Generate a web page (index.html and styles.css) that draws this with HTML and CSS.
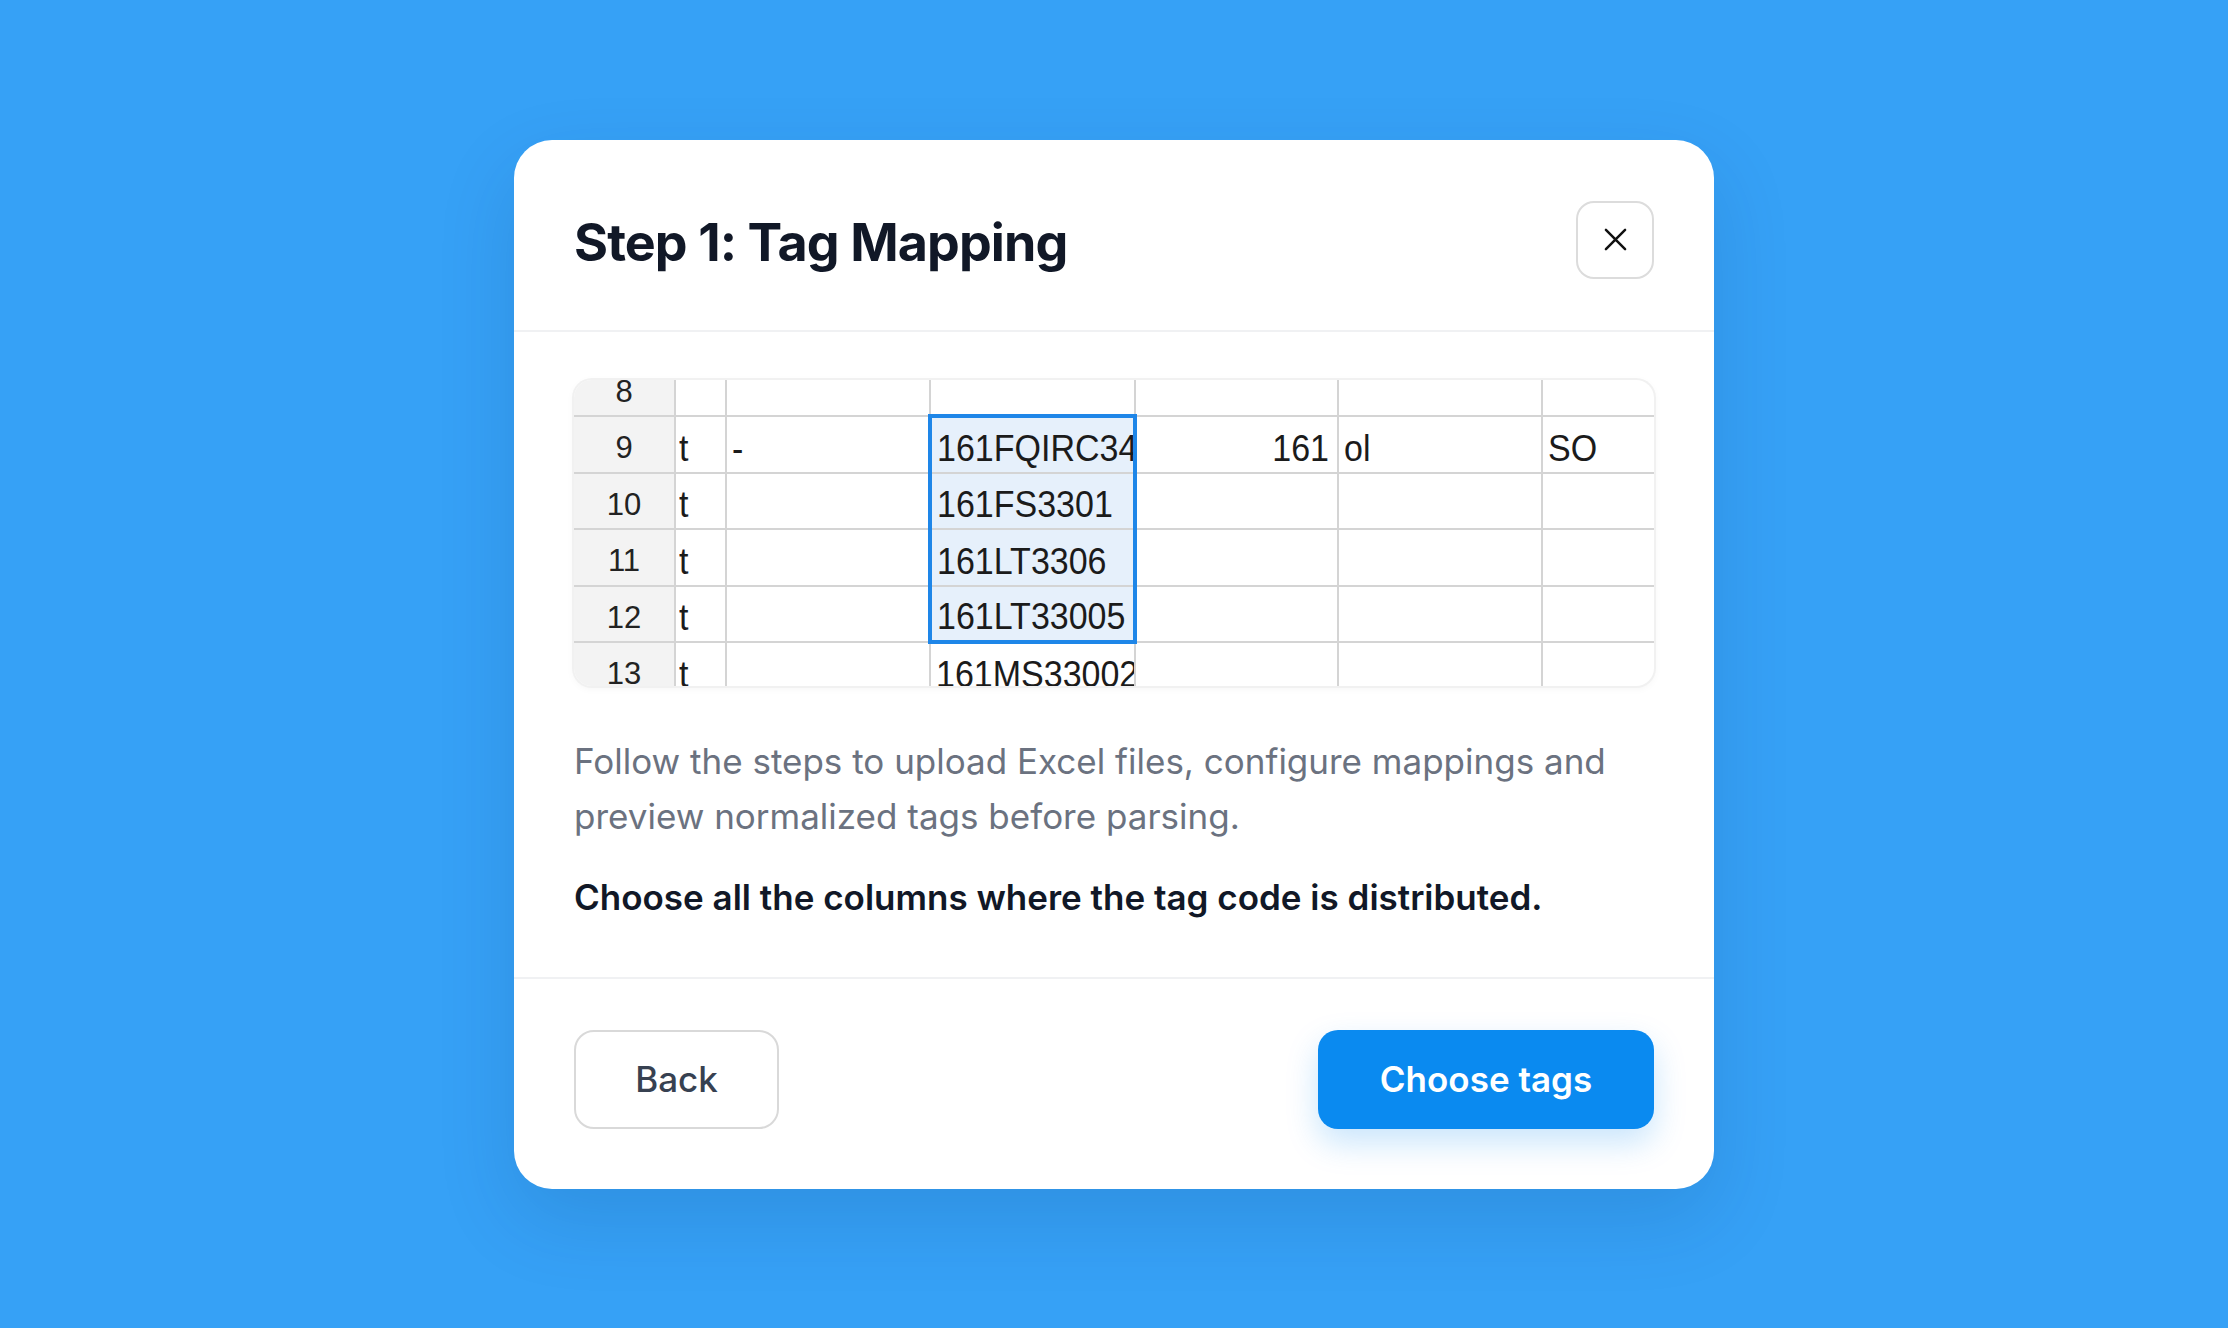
FILE: index.html
```html
<!DOCTYPE html>
<html lang="en">
<head>
<meta charset="utf-8">
<title>Step 1: Tag Mapping</title>
<link rel="stylesheet" href="styles.css">
</head>
<body>
<div class="modal">
  <div class="modal-header">
    <h1 class="title">Step 1: Tag Mapping</h1>
    <button class="close" aria-label="Close">
      <svg viewBox="0 0 24 24" width="24" height="24"><path d="M2 2 L22 22 M22 2 L2 22" stroke="#111" stroke-width="2.6" stroke-linecap="round" fill="none"/></svg>
    </button>
  </div>
  <div class="modal-body">
    <div class="sheet">
      <table class="grid">
        <colgroup>
          <col class="c-num"><col class="c-a"><col class="c-b"><col class="c-c"><col class="c-d"><col class="c-e"><col class="c-f">
        </colgroup>
        <tr>
          <td class="num">8</td><td></td><td></td><td></td><td></td><td></td><td></td>
        </tr>
        <tr>
          <td class="num">9</td><td><span>t</span></td><td><span>-</span></td><td class="sel top"><span>161FQIRC34</span></td><td class="right"><span>161</span></td><td><span>ol</span></td><td><span>SO</span></td>
        </tr>
        <tr>
          <td class="num">10</td><td><span>t</span></td><td></td><td class="sel"><span>161FS3301</span></td><td></td><td></td><td></td>
        </tr>
        <tr>
          <td class="num">11</td><td><span>t</span></td><td></td><td class="sel"><span>161LT3306</span></td><td></td><td></td><td></td>
        </tr>
        <tr>
          <td class="num">12</td><td><span>t</span></td><td></td><td class="sel bottom"><span>161LT33005</span></td><td></td><td></td><td></td>
        </tr>
        <tr>
          <td class="num">13</td><td><span>t</span></td><td></td><td><span>161MS33002</span></td><td></td><td></td><td></td>
        </tr>
      </table>
    </div>
    <p class="desc">Follow the steps to upload Excel files, configure mappings and preview normalized tags before parsing.</p>
    <p class="prompt">Choose all the columns where the tag code is distributed.</p>
  </div>
  <div class="modal-footer">
    <button class="btn btn-back">Back</button>
    <button class="btn btn-primary">Choose tags</button>
  </div>
</div>
</body>
</html>
```

FILE: styles.css
```css
* { box-sizing: border-box; }

html, body {
  margin: 0;
  padding: 0;
  height: 100%;
}

body {
  background: #36a1f6;
  display: flex;
  align-items: center;
  justify-content: center;
  font-family: Inter, "Noto Sans", sans-serif;
}

.modal {
  width: 1200px;
  background: #ffffff;
  border-radius: 38px;
  box-shadow: 0 30px 80px rgba(0, 40, 100, 0.14);
  overflow: hidden;
}

.modal-header {
  display: flex;
  align-items: center;
  justify-content: space-between;
  padding: 61px 60px 51px;
  border-bottom: 2px solid #f0f1f3;
}

.title {
  margin: 8px 0 0;
  font-size: 52px;
  font-weight: 700;
  color: #111827;
  letter-spacing: -0.9px;
  line-height: 1.2;
}

.close {
  width: 78px;
  height: 78px;
  border: 2px solid #dcdcdc;
  border-radius: 18px;
  background: #fff;
  display: flex;
  align-items: center;
  justify-content: center;
  padding: 0;
  cursor: pointer;
}

.close svg {
  width: 23px;
  height: 23px;
}

.modal-body {
  padding: 48px 60px 52px;
}

.sheet {
  height: 306px;
  border-radius: 18px;
  overflow: hidden;
  background: #fff;
  box-shadow: 0 0 0 2px #f1f1f1, 0 2px 8px rgba(0, 0, 0, 0.05);
}

.grid {
  border-collapse: collapse;
  table-layout: fixed;
  width: 1170px;
  margin-top: -21px;
  margin-left: -2px;
  font-family: "Liberation Sans", Arial, sans-serif;
  color: #1b1b1b;
}

.c-num { width: 102px; }
.c-a { width: 51px; }
.c-b { width: 204px; }
.c-c { width: 205px; }
.c-d { width: 203px; }
.c-e { width: 204px; }
.c-f { width: 201px; }

.grid td {
  height: 56.5px;
  border: 2px solid #d4d4d4;
  padding: 0 6px 3px 5px;
  font-size: 34px;
  line-height: 40px;
  vertical-align: bottom;
  white-space: nowrap;
  overflow: hidden;
  text-overflow: clip;
}

.grid td span {
  display: inline-block;
  transform: scaleY(1.1);
  transform-origin: 50% 85%;
}

.grid td:first-child + td {
  padding-left: 3px;
}

.grid td.num {
  background: #f3f3f3;
  text-align: center;
  font-size: 31px;
  padding: 8px 0 0 0;
  vertical-align: middle;
  color: #222;
}

.grid td.right {
  text-align: right;
  padding-right: 8px;
}

.grid td.sel {
  background: #e6f0fb;
  border-left: 4px solid #1e86e8;
  border-right: 4px solid #1e86e8;
}

.grid td.sel.top { border-top: 4px solid #1e86e8; }
.grid td.sel.bottom { border-bottom: 4px solid #1e86e8; }

.desc {
  margin: 48px 0 0;
  font-size: 35px;
  line-height: 55px;
  color: #6b7280;
}

.prompt {
  margin: 26px 0 0;
  font-size: 35px;
  line-height: 55px;
  font-weight: 600;
  color: #111827;
}

.modal-footer {
  display: flex;
  align-items: center;
  justify-content: space-between;
  padding: 51px 60px 60px;
  border-top: 2px solid #f0f1f3;
}

.btn {
  height: 99px;
  border-radius: 20px;
  font-family: Inter, "Noto Sans", sans-serif;
  font-size: 35px;
  cursor: pointer;
  padding: 0;
}

.btn-back {
  width: 205px;
  background: #fff;
  border: 2px solid #d9d9d9;
  color: #374151;
  font-weight: 500;
}

.btn-primary {
  width: 336px;
  background: #0a8af0;
  border: none;
  color: #fff;
  font-weight: 600;
  box-shadow: 0 14px 32px rgba(10, 138, 240, 0.22);
}
```
